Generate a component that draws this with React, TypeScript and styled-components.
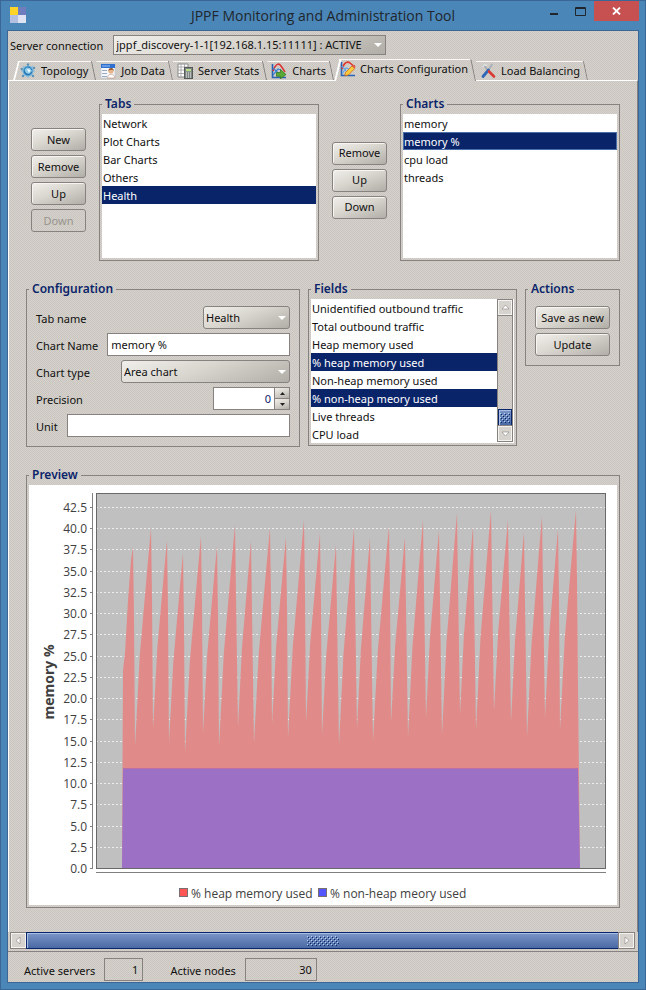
import React from "react";
import styled, { createGlobalStyle, css } from "styled-components";

const FACE = "#d6d3ce";
const LINE = "#878280";
const NAVY = "#0a246a";

const Global = createGlobalStyle`
  *, *::before, *::after { box-sizing: border-box; }
  body { margin: 0; background: #4b86b9; }
  body, button, input, select {
    font-family: "Noto Sans", "Open Sans", sans-serif;
    font-size: 11px;
    line-height: 18px;
    color: #101010;
  }
`;

const dither = css`
  background: repeating-conic-gradient(#cac6bf 0 25%, #d5d1cc 0 50%) 0 0 / 2px 2px;
`;
const raised = css`
  background: linear-gradient(160deg, #f1efeb 0%, #d9d6cf 45%, #b1aea7 100%);
`;

const Frame = styled.div`
  display: flex;
  flex-direction: column;
  min-height: 100vh;
  padding: 0 6px 6px;
  background: #4b86b9;
  border: 1px solid #3b6796;
`;
const TitleBar = styled.header`
  display: grid;
  grid-template-columns: 92px 1fr 92px;
  height: 29px;
`;
const AppMark = styled.svg`
  width: 16px;
  height: 16px;
  margin: 6px 0 0 3px;
`;
const Title = styled.h1`
  margin: 0;
  text-align: center;
  font: 400 14px/30px "Open Sans", "Noto Sans", sans-serif;
  color: #20262b;
  white-space: nowrap;
`;
const WindowButtons = styled.div`
  display: flex;
  justify-content: flex-end;
`;
const WindowButton = styled.button<{ $close?: boolean }>`
  width: ${(p) => (p.$close ? 45 : 27)}px;
  flex: none;
  height: 20px;
  padding: 0;
  border: 0;
  display: grid;
  place-items: center;
  background: ${(p) => (p.$close ? "#c75050" : "transparent")};
`;
const Body = styled.main`
  flex: 1;
  display: flex;
  flex-direction: column;
  border: 1px solid #3b6796;
  ${dither}
`;
const ServerRow = styled.div`
  display: flex;
  align-items: center;
  gap: 10px;
  padding: 3px 2px 0;
  label { padding-top: 3px; }
`;

const SelectBox = styled.span<{ $width: number; $square?: boolean }>`
  position: relative;
  flex: 0 1 ${(p) => p.$width}px;
  min-width: 0;
  height: ${(p) => (p.$square ? 20 : 23)}px;
  select {
    appearance: none;
    width: 100%;
    height: 100%;
    padding: 0 18px 0 2px;
    border: 1px solid ${LINE};
    border-radius: ${(p) => (p.$square ? 0 : 3)}px;
    outline: 0;
    ${raised}
  }
  &::after {
    content: "";
    position: absolute;
    right: 4px;
    top: 50%;
    margin-top: -2px;
    border: 4px solid transparent;
    border-top-color: #fff;
    border-bottom: 0;
    pointer-events: none;
  }
`;

const TabStrip = styled.div`
  display: flex;
  align-items: flex-end;
  height: 25px;
  padding-left: 5px;
`;
const Tab = styled.button<{ $active?: boolean; $first?: boolean }>`
  position: relative;
  z-index: ${(p) => (p.$active ? 2 : 1)};
  display: flex;
  align-items: center;
  gap: ${(p) => (p.$active ? 4 : 5)}px;
  height: ${(p) => (p.$active ? 22 : 19)}px;
  margin-bottom: ${(p) => (p.$active ? -1 : 0)}px;
  padding: 0 8px ${(p) => (p.$active ? 2 : 0)}px ${(p) => (p.$first ? 7 : p.$active ? 6 : 4)}px;
  border: 0;
  white-space: nowrap;
  ${(p) => (p.$active ? dither : "background: transparent;")}
  box-shadow: inset 0 1px #f8f7f5;
  clip-path: polygon(${(p) => (p.$first || p.$active ? "5px 0" : "0 0")}, calc(100% - 4px) 0, 100% 100%, 0 100%);
  &::before {
    content: "";
    display: ${(p) => (p.$first || p.$active ? "block" : "none")};
    position: absolute;
    inset: 0 auto 0 0;
    width: 2px;
    background: #fff;
    transform: skewX(-14deg);
    transform-origin: bottom;
  }
  &::after {
    content: "";
    position: absolute;
    inset: 0 0 0 auto;
    width: 1px;
    background: ${LINE};
    transform: skewX(12deg);
    transform-origin: bottom;
  }
  svg { width: 16px; height: 16px; flex: none; }
`;
const Panel = styled.section`
  flex: 1;
  display: flex;
  flex-direction: column;
  gap: 21px;
  padding: 16px 17px 0 17px;
  border: 1px solid #fff;
  border-right-color: ${LINE};
  border-bottom: 0;
`;

const ListRow = styled.div`
  display: flex;
  align-items: center;
  gap: 13px;
  padding-left: 5px;
`;
const ConfigRow = styled.div`
  display: grid;
  grid-template-columns: minmax(0, 1fr) 209px 95px;
  gap: 8px;
  align-items: start;
`;
const ButtonColumn = styled.div<{ $width: number; $legendOffset?: boolean }>`
  display: flex;
  flex-direction: column;
  gap: 4px;
  flex: none;
  width: ${(p) => p.$width}px;
  padding-top: ${(p) => (p.$legendOffset ? 2 : 0)}px;
`;
const PushButton = styled.button`
  height: 23px;
  padding: 0;
  border: 1px solid ${LINE};
  border-radius: 3px;
  box-shadow: inset 1px 1px #f7f5f2;
  white-space: nowrap;
  ${raised}
  &:disabled {
    color: #98948e;
    background: transparent;
    box-shadow: none;
  }
`;

const Group = styled.fieldset<{ $pad?: string }>`
  flex: 1;
  min-width: 0;
  margin: 0;
  padding: ${(p) => p.$pad ?? "3px 2px 2px"};
  border: 1px solid ${LINE};
  legend {
    margin-left: ${(p) => (p.$pad ? "-7px" : "0")};
    padding: 0 3px;
    font-weight: 600;
    font-size: 12px;
    line-height: 14px;
    color: ${NAVY};
  }
`;
const ListFrame = styled.div`
  display: flex;
  background: #fff;
`;
const List = styled.ul`
  flex: 1;
  min-width: 0;
  height: 144px;
  margin: 0;
  padding: 0;
  list-style: none;
  overflow: hidden;
`;
const Item = styled.li<{ $focus?: boolean }>`
  height: 18px;
  padding-left: 1px;
  line-height: 20px;
  white-space: nowrap;
  &[aria-selected="true"] {
    color: #fff;
    background: ${NAVY};
    box-shadow: ${(p) => (p.$focus ? "inset 0 0 0 1px #4a6ea9" : "none")};
  }
`;

const FieldStack = styled.div`
  display: flex;
  flex-direction: column;
  gap: 4px;
`;
const FieldRow = styled.div`
  display: flex;
  justify-content: space-between;
  align-items: center;
  gap: 9px;
  height: 23px;
  label { flex: none; padding-top: 2px; }
`;
const TextInput = styled.input`
  flex: 1;
  min-width: 0;
  height: 23px;
  padding: 0 3px;
  border: 1px solid ${LINE};
  border-radius: 0;
  background: #fff;
  outline: 0;
`;
const Spinner = styled.span`
  display: flex;
  width: 77px;
  input { text-align: right; color: ${NAVY}; border-right: 0; }
`;
const SpinButtons = styled.span`
  display: flex;
  flex-direction: column;
  width: 16px;
  border: 1px solid ${LINE};
  button {
    flex: 1;
    display: grid;
    place-items: center;
    padding: 0;
    border: 0;
    ${raised}
  }
  button + button { border-top: 1px solid ${LINE}; }
`;

const ScrollTrack = styled.div<{ $vertical?: boolean }>`
  display: flex;
  flex-direction: ${(p) => (p.$vertical ? "column" : "row")};
  ${(p) => (p.$vertical ? "width: 16px; height: 143px; margin-right: 1px;" : "height: 17px; margin: 0 3px 2px 2px;")}
  ${dither}
  border: 1px solid ${LINE};
`;
const ScrollArrow = styled.button`
  flex: 0 0 15px;
  display: grid;
  place-items: center;
  padding: 0;
  border: 1px solid #f5f3f0;
  box-shadow: 0 0 0 1px ${LINE};
  background: ${FACE};
`;
const ScrollSpace = styled.div`
  flex: 1;
`;
const ScrollThumb = styled.div<{ $vertical?: boolean }>`
  ${(p) => (p.$vertical ? "height: 17px;" : "flex: 1; margin: -1px 0;")}
  display: grid;
  place-items: center;
  border: 1px solid ${NAVY};
  box-shadow: inset 1px 1px #a8bfe6;
  background: linear-gradient(#7b95c6, #4a6aa5);
  svg { display: block; }
`;
const ScrollDock = styled.div`
  border-bottom: 1px solid ${LINE};
`;
const StatusBar = styled.footer`
  display: flex;
  align-items: flex-start;
  height: 30px;
  padding: 6px 16px 0;
  gap: 9px;
  label { padding-top: 4px; }
  label + input + label { margin-left: 18px; }
`;
const StatusValue = styled.input<{ $width: number }>`
  width: ${(p) => p.$width}px;
  height: 23px;
  padding: 0 4px;
  text-align: right;
  border: 1px solid ${LINE};
  border-radius: 0;
  background: transparent;
`;
const ChartSvg = styled.svg`
  display: block;
  width: 100%;
  height: auto;
  background: #fff;
  text { font-family: "Open Sans", "Noto Sans", sans-serif; font-size: 12px; fill: #404040; }
`;
const AxisTitle = styled.text`
  && { font-size: 14px; font-weight: 700; }
`;

const Arrow = ({ d }: { d: string }) => (
  <svg width="9" height="9" viewBox="0 0 9 9"><path d={d} fill="#fff" stroke="#77736d" strokeWidth=".5" /></svg>
);
const UP = "M4.500 2L8 6H1z";
const DOWN = "M1 3H8L4.500 7z";
const LEFT = "M6 1V8L2 4.500z";
const RIGHT = "M3 1V8L7 4.500z";

const Grip = ({ id, width }: { id: string; width: number }) => (
  <svg width={width} height="10" aria-hidden="true">
    <pattern id={id} width="4" height="4" patternUnits="userSpaceOnUse">
      <path d="M0 0h1v1H0zM2 2h1v1H2z" fill="#bcd0f2" />
      <path d="M1 1h1v1H1zM3 3h1v1H3z" fill={NAVY} />
    </pattern>
    <rect width={width} height="10" fill={`url(#${id})`} />
  </svg>
);

const TopologyIcon = () => (
  <svg viewBox="0 0 16 16">
    <path d="M8 1v14M1 8h14M3 3l10 10M13 3L3 13" stroke="#8bbbd9" strokeWidth="1.200" />
    <circle cx="8" cy="8" r="5.500" fill="#74b4dc" />
    <circle cx="8" cy="8" r="4.400" fill="#2677b4" />
    <path d="M4.500 7l2-2.500 3.500.5 2 3-3 3-3-1z" fill="#8fcbe8" />
    <path d="M7 6l3.500 1-1.500 3z" fill="#f5fbff" />
    <g fill="#5b93b8"><circle cx="8" cy="1.500" r="1.200" /><circle cx="1.800" cy="6" r="1.200" /><circle cx="14" cy="5" r="1.200" /><circle cx="3" cy="13" r="1.200" /><circle cx="13" cy="13" r="1.200" /></g>
  </svg>
);
const JobIcon = () => (
  <svg viewBox="0 0 16 16">
    <rect x="1" y="1" width="14" height="14" fill="#f4f7fb" stroke="#b8c4d6" strokeWidth=".6" />
    <rect x="1" y="1" width="14" height="4" fill="#2f6fd0" />
    <path d="M2 3h8" stroke="#9cc3f5" />
    <path d="M2 7.500h5M2 10.500h5M2 13.500h5" stroke="#9aa8c0" />
    <circle cx="11" cy="8" r="2.600" fill="#e8b58a" />
    <path d="M8.400 8c0-4 5.600-4 5.400 0l-1-1.200H10z" fill="#8a4b20" />
    <path d="M7.500 15c0-5 7-5 7.500 0z" fill="#fff" stroke="#c48b74" strokeWidth=".6" />
  </svg>
);
const StatsIcon = () => (
  <svg viewBox="0 0 16 16">
    <path d="M1 1h10v13H1z" fill="#fff" stroke="#888" />
    <path d="M1 4h10M1 7h10M1 10.500h10M4 1v13M7.500 1v13" stroke="#9c9c9c" strokeWidth=".8" />
    <rect x="7.500" y="4.500" width="8" height="11" fill="#7f8683" stroke="#555a58" />
    <rect x="9" y="6" width="5" height="2.200" fill="#b8e08c" />
    <path d="M9 10h1M11 10h1M13 10h1M9 12h1M11 12h1M13 12h1M9 14h1M11 14h1M13 14h1" stroke="#f2f2f2" />
  </svg>
);
const ChartsIcon = () => (
  <svg viewBox="0 0 16 16" fill="none">
    <path d="M1.500 1v13.500H15" stroke="#2863b4" strokeWidth="1.600" />
    <path d="M2 8C5 0 8 0 10 3s3 4 4 6" stroke="#dc3434" strokeWidth="1.600" />
    <path d="M2 5l5 5M2 12l5-6 3 1" stroke="#3d83d6" strokeWidth="1.300" />
    <path d="M5.500 9.500h4V6.500l5.500 5-5.500 4.300v-2.500h-4z" fill="#58a936" stroke="#2c7319" strokeWidth=".7" />
  </svg>
);
const ChartConfigIcon = () => (
  <svg viewBox="0 0 16 16" fill="none">
    <path d="M1.500 1v13.500H15" stroke="#2863b4" strokeWidth="1.600" />
    <path d="M2 8C4 1 8 0 10 2s3 3 5 3" stroke="#e0392e" strokeWidth="1.700" />
    <path d="M2 5l4 5M2 13l4-6 3 1" stroke="#64a8e8" strokeWidth="1.300" />
    <path d="M5.500 11.500L12 5l2.800 2.500-6.500 6.500-3.500.8z" fill="#f9cb3c" stroke="#c96c17" strokeWidth=".8" />
    <path d="M12 5l2.800 2.500.7-2-1.700-1.500z" fill="#e45b50" />
  </svg>
);
const ToolsIcon = () => (
  <svg viewBox="0 0 16 16" fill="none" strokeLinecap="round">
    <path d="M4 2.500l5 6" stroke="#a4a9ad" strokeWidth="1.800" />
    <path d="M3 4l1.500-2.500 2 1" stroke="#dfe1e3" strokeWidth="1.400" />
    <path d="M8.500 7l3.500-5.500" stroke="#a9afb5" strokeWidth="1.800" />
    <path d="M8.500 7L3 13.500" stroke="#2f67b8" strokeWidth="2.800" />
    <path d="M9 8.500l5 5" stroke="#d93a34" strokeWidth="2.600" />
  </svg>
);

const TABS = [
  { name: "Topology", Icon: TopologyIcon },
  { name: "Job Data", Icon: JobIcon },
  { name: "Server Stats", Icon: StatsIcon },
  { name: "Charts", Icon: ChartsIcon },
  { name: "Charts Configuration", Icon: ChartConfigIcon },
  { name: "Load Balancing", Icon: ToolsIcon },
];

/* Heap samples: horizontal offset in the plot and height above the axis. */
const PEAKS = [[37, 321], [55, 340], [71, 328], [87, 315], [105, 332], [121, 322], [139, 343], [155, 327], [174, 340], [190, 331], [208, 348], [224, 335], [240, 323], [258, 340], [274, 330], [293, 342], [309, 331], [327, 348], [343, 338], [361, 355], [377, 342], [395, 358], [412, 348], [428, 336], [446, 352], [462, 339], [480, 358]];
const LOWS = [[39, 121], [57, 139], [73, 125], [89, 115], [107, 135], [123, 121], [142, 141], [158, 125], [176, 144], [192, 130], [210, 145], [226, 133], [243, 123], [261, 139], [277, 127], [295, 145], [312, 131], [330, 150], [346, 133], [364, 153], [380, 138], [398, 157], [415, 146], [431, 131], [449, 150], [464, 138]];

const PLOT = { x: 67, top: 8, right: 576, base: 383 };

function heapOutline() {
  const pts: number[][] = [[26, 0], [27, 198], [29, 215], [32, 268], [35, 308]];
  PEAKS.forEach(([px, ph], i) => {
    pts.push([px, ph], [px + 1, ph - 70]);
    const low = LOWS[i];
    if (low) {
      const next = PEAKS[i + 1];
      const w = next[0] - low[0];
      const h = next[1] - low[1];
      pts.push(low, [low[0] + w * 0.3, low[1] + h * 0.42], [low[0] + w * 0.8, low[1] + h * 0.84]);
    }
  });
  pts.push([482, 180], [484, 0]);
  return pts.map(([x, h]) => `${PLOT.x + x},${PLOT.base - h}`).join(" ");
}

const Chart = () => {
  const ticks = Array.from({ length: 18 }, (_, i) => i * 2.5);
  const y = (v: number) => Math.round(PLOT.base - v * 8.5) + 0.5;
  return (
    <ChartSvg viewBox="0 0 588 420" role="img" aria-label="memory %">
      <rect x={PLOT.x} y={PLOT.top} width={PLOT.right - PLOT.x} height={PLOT.base - PLOT.top} fill="#c0c0c0" />
      {ticks.map((v) => (
        <g key={v}>
          <path d={`M${PLOT.x} ${y(v)}H${PLOT.right}`} stroke="#ececec" strokeDasharray="2 2" />
          <path d={`M61 ${y(v)}h3`} stroke="#808080" />
          <text x="58" y={y(v) + 4} textAnchor="end">{v.toFixed(1)}</text>
        </g>
      ))}
      <polygon points={heapOutline()} fill="#e08b89" />
      <path d={`M${PLOT.x + 27} 283.500H${PLOT.x + 482}`} stroke="#b76fa6" />
      <polygon points={`93,${PLOT.base} 94,284 549,284 551,${PLOT.base}`} fill="#9b70c5" />
      <rect x={PLOT.x + 0.5} y={PLOT.top + 0.5} width={PLOT.right - PLOT.x} height={PLOT.base - PLOT.top} fill="none" stroke="#696969" />
      <path d={`M63.500 ${PLOT.top}V${PLOT.base + 1}M${PLOT.x} 387.500H577`} stroke="#808080" />
      <AxisTitle x="25" y="197" textAnchor="middle" transform="rotate(-90 25 197)">memory %</AxisTitle>
      <rect x="150.500" y="403.500" width="8" height="8" fill="#ff5555" stroke="#77706e" />
      <text x="162" y="413">% heap memory used</text>
      <rect x="289.500" y="403.500" width="8" height="8" fill="#5555ff" stroke="#77706e" />
      <text x="301" y="413">% non-heap meory used</text>
    </ChartSvg>
  );
};

type ListProps = { label: string; items: string[]; selected: string[]; focused?: string };
const ListBox = ({ label, items, selected, focused }: ListProps) => (
  <List role="listbox" aria-label={label}>
    {items.map((t) => (
      <Item key={t} role="option" aria-selected={selected.includes(t)} $focus={t === focused}>{t}</Item>
    ))}
  </List>
);

export default function App() {
  return (
    <Frame>
      <Global />
      <TitleBar>
        <AppMark viewBox="0 0 16 16">
          <path d="M0 0h8v8H0z" fill="#fdd327" /><path d="M8 0h8v8H8z" fill="#6f7cbd" />
          <path d="M0 8h8v8H0z" fill="#b3bfe0" /><path d="M8 8h8v8H8z" fill="#dfe3f2" />
        </AppMark>
        <Title>JPPF Monitoring and Administration Tool</Title>
        <WindowButtons>
          <WindowButton aria-label="Minimize"><svg width="10" height="10"><path d="M1 8h8" stroke="#20262b" strokeWidth="2" /></svg></WindowButton>
          <WindowButton aria-label="Maximize"><svg width="11" height="9"><path d="M.5.5h10v8H.5zM0 1.500h11" fill="none" stroke="#20262b" /></svg></WindowButton>
          <WindowButton $close aria-label="Close"><svg width="9" height="8"><path d="M1 .5l7 7M8 .5l-7 7" stroke="#fff" strokeWidth="1.800" /></svg></WindowButton>
        </WindowButtons>
      </TitleBar>
      <Body>
        <ServerRow>
          <label htmlFor="server">Server connection</label>
          <SelectBox $width={273} $square>
            <select id="server"><option>jppf_discovery-1-1[192.168.1.15:11111] : ACTIVE</option></select>
          </SelectBox>
        </ServerRow>
        <TabStrip role="tablist">
          {TABS.map(({ name, Icon }, i) => (
            <Tab key={name} role="tab" aria-selected={i === 4} $active={i === 4} $first={i === 0}><Icon />{name}</Tab>
          ))}
        </TabStrip>
        <Panel>
          <ListRow>
            <ButtonColumn $width={55} $legendOffset>
              <PushButton>New</PushButton>
              <PushButton>Remove</PushButton>
              <PushButton>Up</PushButton>
              <PushButton disabled>Down</PushButton>
            </ButtonColumn>
            <Group>
              <legend>Tabs</legend>
              <ListFrame><ListBox label="Tabs" items={["Network", "Plot Charts", "Bar Charts", "Others", "Health"]} selected={["Health"]} /></ListFrame>
            </Group>
            <ButtonColumn $width={55} $legendOffset>
              <PushButton>Remove</PushButton>
              <PushButton>Up</PushButton>
              <PushButton>Down</PushButton>
            </ButtonColumn>
            <Group>
              <legend>Charts</legend>
              <ListFrame><ListBox label="Charts" items={["memory", "memory %", "cpu load", "threads"]} selected={["memory %"]} focused="memory %" /></ListFrame>
            </Group>
          </ListRow>
          <ConfigRow>
            <Group $pad="10px 9px 9px">
              <legend>Configuration</legend>
              <FieldStack>
                <FieldRow>
                  <label htmlFor="tab">Tab name</label>
                  <SelectBox $width={87}><select id="tab"><option>Health</option></select></SelectBox>
                </FieldRow>
                <FieldRow>
                  <label htmlFor="name">Chart Name</label>
                  <TextInput id="name" defaultValue="memory %" />
                </FieldRow>
                <FieldRow>
                  <label htmlFor="type">Chart type</label>
                  <SelectBox $width={169}><select id="type"><option>Area chart</option></select></SelectBox>
                </FieldRow>
                <FieldRow>
                  <label htmlFor="precision">Precision</label>
                  <Spinner>
                    <TextInput id="precision" defaultValue="0" />
                    <SpinButtons>
                      <button aria-label="Increase"><svg width="5" height="3"><path d="M2.500 0L5 3H0z" fill="#222" /></svg></button>
                      <button aria-label="Decrease"><svg width="5" height="3"><path d="M0 0H5L2.500 3z" fill="#222" /></svg></button>
                    </SpinButtons>
                  </Spinner>
                </FieldRow>
                <FieldRow>
                  <label htmlFor="unit">Unit</label>
                  <TextInput id="unit" />
                </FieldRow>
              </FieldStack>
            </Group>
            <Group>
              <legend>Fields</legend>
              <ListFrame>
                <ListBox
                  label="Fields"
                  items={["Unidentified outbound traffic", "Total outbound traffic", "Heap memory used", "% heap memory used", "Non-heap memory used", "% non-heap meory used", "Live threads", "CPU load"]}
                  selected={["% heap memory used", "% non-heap meory used"]}
                />
                <ScrollTrack $vertical>
                  <ScrollArrow aria-label="Scroll up"><Arrow d={UP} /></ScrollArrow>
                  <ScrollSpace />
                  <ScrollThumb $vertical><Grip id="grip-v" width={10} /></ScrollThumb>
                  <ScrollArrow aria-label="Scroll down"><Arrow d={DOWN} /></ScrollArrow>
                </ScrollTrack>
              </ListFrame>
            </Group>
            <Group $pad="10px 9px 9px">
              <legend>Actions</legend>
              <ButtonColumn $width={75}>
                <PushButton>Save as new</PushButton>
                <PushButton>Update</PushButton>
              </ButtonColumn>
            </Group>
          </ConfigRow>
          <div>
            <Group>
              <legend>Preview</legend>
              <Chart />
            </Group>
          </div>
        </Panel>
        <ScrollDock>
          <ScrollTrack>
            <ScrollArrow aria-label="Scroll left"><Arrow d={LEFT} /></ScrollArrow>
            <ScrollThumb><Grip id="grip-h" width={32} /></ScrollThumb>
            <ScrollArrow aria-label="Scroll right"><Arrow d={RIGHT} /></ScrollArrow>
          </ScrollTrack>
        </ScrollDock>
        <StatusBar>
          <label htmlFor="servers">Active servers</label>
          <StatusValue id="servers" $width={39} readOnly value="1" />
          <label htmlFor="nodes">Active nodes</label>
          <StatusValue id="nodes" $width={72} readOnly value="30" />
        </StatusBar>
      </Body>
    </Frame>
  );
}
